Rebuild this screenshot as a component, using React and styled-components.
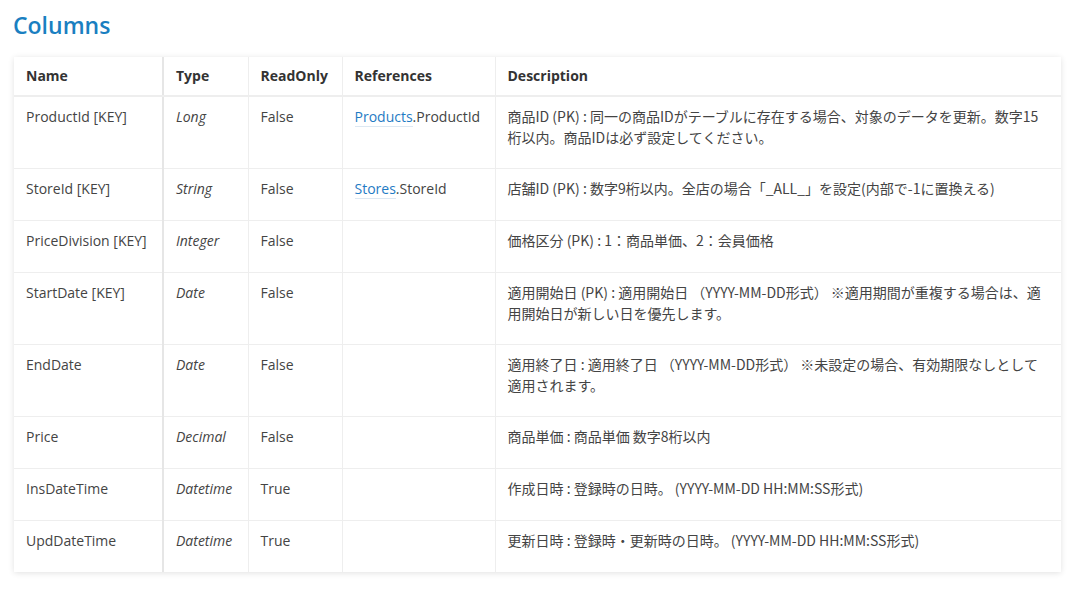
import React from 'react';
import styled, { createGlobalStyle } from 'styled-components';

const GlobalStyle = createGlobalStyle`
  body {
    margin: 0;
    background: #fff;
    font-family: 'Open Sans', 'Noto Sans CJK JP', sans-serif;
    color: #444;
  }
`;

const rows = [
  { name: 'ProductId [KEY]', type: 'Long', ro: 'False', ref: ['Products', 'ProductId'], desc: '商品ID (PK) : 同一の商品IDがテーブルに存在する場合、対象のデータを更新。数字15桁以内。商品IDは必ず設定してください。' },
  { name: 'StoreId [KEY]', type: 'String', ro: 'False', ref: ['Stores', 'StoreId'], desc: '店舗ID (PK) : 数字9桁以内。全店の場合「_ALL_」を設定(内部で-1に置換える)' },
  { name: 'PriceDivision [KEY]', type: 'Integer', ro: 'False', desc: '価格区分 (PK) : 1：商品単価、2：会員価格' },
  { name: 'StartDate [KEY]', type: 'Date', ro: 'False', desc: '適用開始日 (PK) : 適用開始日 （YYYY-MM-DD形式） ※適用期間が重複する場合は、適用開始日が新しい日を優先します。' },
  { name: 'EndDate', type: 'Date', ro: 'False', desc: '適用終了日 : 適用終了日 （YYYY-MM-DD形式） ※未設定の場合、有効期限なしとして適用されます。' },
  { name: 'Price', type: 'Decimal', ro: 'False', desc: '商品単価 : 商品単価 数字8桁以内' },
  { name: 'InsDateTime', type: 'Datetime', ro: 'True', desc: '作成日時 : 登録時の日時。 (YYYY-MM-DD HH:MM:SS形式)' },
  { name: 'UpdDateTime', type: 'Datetime', ro: 'True', desc: '更新日時 : 登録時・更新時の日時。 (YYYY-MM-DD HH:MM:SS形式)' },
];

const widths = [149, 85, 94, 153, 566];

const App = () => (
  <>
    <GlobalStyle />
    <Page>
      <Title>Columns</Title>
      <Table>
        <colgroup>
          {widths.map((w, i) => <col key={i} style={{ width: w }} />)}
        </colgroup>
        <thead>
          <tr>
            <Th>Name</Th>
            <Th>Type</Th>
            <Th>ReadOnly</Th>
            <Th>References</Th>
            <Th>Description</Th>
          </tr>
        </thead>
        <tbody>
          {rows.map((r) => (
            <tr key={r.name}>
              <Td>{r.name}</Td>
              <Td $italic>{r.type}</Td>
              <Td>{r.ro}</Td>
              <Td>
                {r.ref && (
                  <>
                    <RefLink>{r.ref[0]}</RefLink>.{r.ref[1]}
                  </>
                )}
              </Td>
              <Td $cjk>{r.desc}</Td>
            </tr>
          ))}
        </tbody>
      </Table>
    </Page>
  </>
);

const Page = styled.div`
  padding: 8px 28px 20px 14px;
`;

const Title = styled.h2`
  margin: 0 0 15px -1px;
  font-size: 23px;
  font-weight: 600;
  color: #1a7fc1;
  line-height: 34px;
`;

const Table = styled.table`
  width: 1047px;
  table-layout: fixed;
  border-collapse: collapse;
  box-shadow: 0 1px 6px rgba(0, 0, 0, 0.12);
  font-size: 14px;
  line-height: 22px;
`;

const Th = styled.th`
  text-align: left;
  font-weight: 700;
  color: #333;
  padding: 8px 12px;
  border-bottom: 2px solid #eee;
  border-left: 1px solid #eee;
  &:first-child { border-left: none; }
  &:nth-child(2) { border-left: 2px solid #e6e6e6; }
`;

const Td = styled.td`
  vertical-align: top;
  padding: 9px 12px 20px;
  border-top: 1px solid #eee;
  border-left: 1px solid #eee;
  font-style: ${(p) => (p.$italic ? 'italic' : 'normal')};
  font-family: ${(p) => (p.$cjk ? "'Noto Sans CJK JP', 'Open Sans', sans-serif" : 'inherit')};
  line-height: ${(p) => (p.$cjk ? '21px' : '22px')};
  &:first-child { border-left: none; }
  &:nth-child(2) { border-left: 2px solid #e6e6e6; }
`;

const RefLink = styled.a`
  color: #1f7bc4;
  border-bottom: 1px solid #dde8f2;
`;

export default App;
